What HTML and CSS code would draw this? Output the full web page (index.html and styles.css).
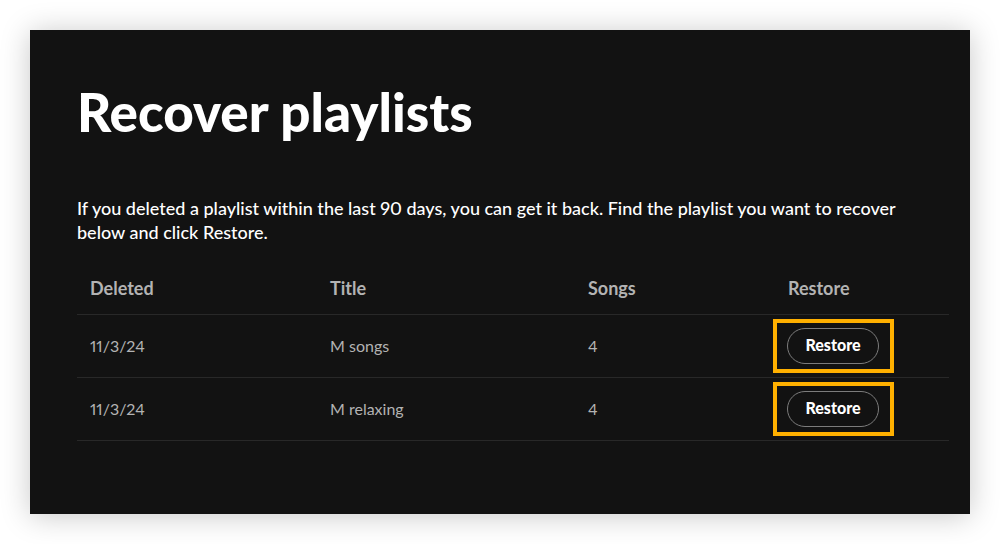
FILE: index.html
```html
<!DOCTYPE html>
<html lang="en">
<head>
<meta charset="utf-8">
<title>Recover playlists</title>
<link rel="stylesheet" href="styles.css">
</head>
<body>
<main class="panel">
  <h1 class="title">Recover playlists</h1>
  <p class="intro">If you deleted a playlist within the last 90 days, you can get it back. Find the playlist you want to recover below and click Restore.</p>
  <table class="playlists">
    <colgroup><col class="col-deleted"><col class="col-title"><col class="col-songs"><col class="col-restore"></colgroup>
    <thead>
      <tr><th scope="col">Deleted</th><th scope="col">Title</th><th scope="col">Songs</th><th scope="col">Restore</th></tr>
    </thead>
    <tbody>
      <tr><td>11/3/24</td><td>M songs</td><td>4</td><td class="action"><div class="highlight"><button class="restore" type="button">Restore</button></div></td></tr>
      <tr><td>11/3/24</td><td>M relaxing</td><td>4</td><td class="action"><div class="highlight"><button class="restore" type="button">Restore</button></div></td></tr>
    </tbody>
  </table>
</main>
</body>
</html>
```
FILE: styles.css
```css
* { box-sizing: border-box; }
body {
  margin: 0;
  padding: 30px;
  background: #fff;
  font-family: Lato, "Liberation Sans", sans-serif;
  font-variant-numeric: proportional-nums;
}
.panel {
  padding: 48px 21px 73px 47px;
  background: #121212;
  color: #fff;
  box-shadow: 0 2px 28px rgba(0, 0, 0, 0.22);
}
.title {
  margin: 0;
  font-size: 53px;
  font-weight: 900;
  line-height: 68px;
}
.intro {
  max-width: 840px;
  margin: 50px 0 0;
  font-size: 18px;
  font-weight: 500;
  line-height: 24px;
}
.playlists {
  width: 100%;
  margin-top: 17px;
  border-collapse: collapse;
  table-layout: fixed;
  color: #b3b3b3;
  font-size: 16px;
}
.col-deleted { width: 240px; }
.col-title { width: 258px; }
.col-songs { width: 200px; }
th {
  height: 53px;
  padding: 2px 13px 0;
  border-bottom: 1px solid #282828;
  font-size: 18px;
  font-weight: 700;
  text-align: left;
}
td {
  height: 63px;
  padding: 0 13px;
  border-bottom: 1px solid #282828;
}
.action { padding: 0; }
.highlight {
  width: 121px;
  height: 54px;
  margin-left: -2px;
  padding: 5px 10px;
  border: 4px solid #ffb000;
}
.restore {
  width: 92px;
  height: 36px;
  padding: 0 0 2px;
  border: 1px solid #7c7c7c;
  border-radius: 18px;
  background: transparent;
  color: #fff;
  font: 900 16px/20px Lato, "Liberation Sans", sans-serif;
}
```
